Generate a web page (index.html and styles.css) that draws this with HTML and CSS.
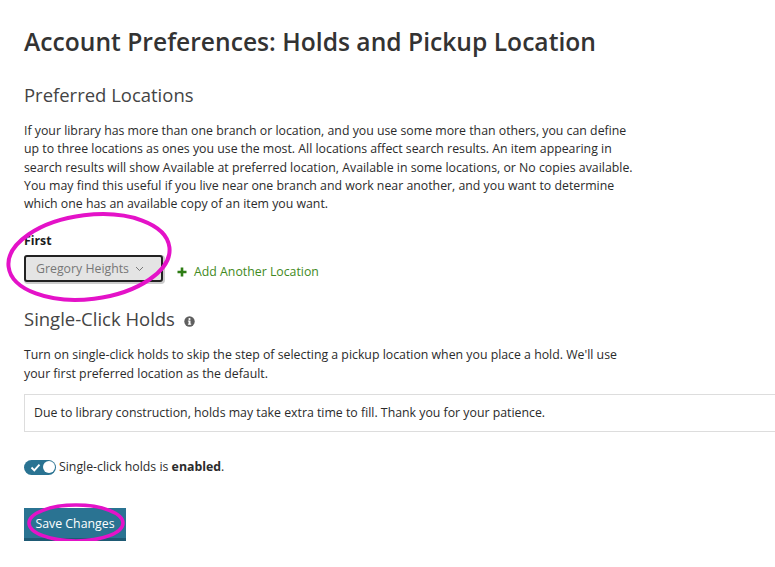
FILE: index.html
```html
<!DOCTYPE html>
<html lang="en">

<head>
  <title>Account Preferences: Holds and Pickup Location</title>
  <link rel="stylesheet" href="styles.css">
</head>

<body>
  <h1 class="page-title">Account Preferences: Holds and Pickup Location</h1>

  <h2 class="section-title">Preferred Locations</h2>
  <p class="intro">If your library has more than one branch or location, and you use some more than others, you can define<br>up to three locations as ones you use the most. All locations affect search results. An item appearing in<br>search results will show Available at preferred location, Available in some locations, or No copies available.<br>You may find this useful if you live near one branch and work near another, and you want to determine<br>which one has an available copy of an item you want.</p>

  <div class="field-label">First</div>
  <div class="location-row">
    <div class="select-wrapper">
      <div class="location-select">
        <span>Gregory Heights</span>
        <svg class="chevron" width="9" height="6" viewBox="0 0 9 6"><path d="M1 1l3.5 3.5L8 1" fill="none" stroke="#777" stroke-width="1"/></svg>
      </div>
      <svg class="circle circle-select" width="170" height="100" viewBox="0 0 170 100"><ellipse cx="85" cy="50" rx="81" ry="42" fill="none" stroke="#e412c8" stroke-width="4" transform="rotate(-7 85 50)"/></svg>
    </div>
    <a class="add-location">
      <svg width="10" height="10" viewBox="0 0 10 10"><path d="M5 0.5v9M0.5 5h9" stroke="#2e7d14" stroke-width="2.6"/></svg>
      <span>Add Another Location</span>
    </a>
  </div>

  <h2 class="section-title holds-title">Single-Click Holds
    <svg class="info" width="11" height="11" viewBox="0 0 11 11"><circle cx="5.5" cy="5.5" r="5.2" fill="#5f5f5f"/><rect x="4.6" y="4.6" width="1.9" height="3.8" fill="#fff"/><rect x="3.9" y="7.7" width="3.3" height="1" fill="#fff"/><rect x="3.9" y="4.6" width="1.6" height="0.9" fill="#fff"/><circle cx="5.5" cy="3" r="1.1" fill="#fff"/></svg>
  </h2>
  <p class="intro holds-intro">Turn on single-click holds to skip the step of selecting a pickup location when you place a hold. We'll use<br>your first preferred location as the default.</p>

  <div class="notice">Due to library construction, holds may take extra time to fill. Thank you for your patience.</div>

  <div class="toggle-row">
    <span class="toggle">
      <svg width="11" height="9" viewBox="0 0 11 9"><path d="M1.5 4.5l2.8 2.8L9.5 1.6" fill="none" stroke="#fff" stroke-width="1.9"/></svg>
      <span class="knob"></span>
    </span>
    <span>Single-click holds is <b>enabled</b>.</span>
  </div>

  <div class="save-wrapper">
    <button class="save-button">Save Changes</button>
    <svg class="circle circle-save" width="100" height="42" viewBox="0 0 100 42"><ellipse cx="50" cy="21" rx="47" ry="18" fill="none" stroke="#e412c8" stroke-width="3.5"/></svg>
  </div>
</body>

</html>
```

FILE: styles.css
```css
body {
  margin: 0;
  padding: 0 0 0 24px;
  background-color: white;
  color: #2b2b2b;
  font-family: "Open Sans", sans-serif;
  font-size: 12.32px;
  line-height: 18.3px;
  overflow: hidden;
}

.page-title {
  margin: 0;
  padding-top: 26px;
  font-size: 24.64px;
  line-height: 32px;
  font-weight: 600;
  color: #333;
}

.section-title {
  margin: 0;
  padding-top: 24px;
  font-size: 18.48px;
  line-height: 26px;
  font-weight: 400;
  color: #444;
}

.intro {
  margin: 14px 0 0;
  white-space: nowrap;
}

.field-label {
  margin-top: 18.5px;
  font-weight: 700;
  color: #1c1c1c;
}

.location-row {
  display: flex;
  align-items: center;
  margin-top: 5px;
}

.select-wrapper {
  position: relative;
}

.location-select {
  display: flex;
  align-items: center;
  gap: 6px;
  box-sizing: border-box;
  width: 139px;
  height: 27px;
  padding-left: 10px;
  background-color: #e4e4e4;
  border: 2px solid #222;
  border-radius: 3px;
  box-shadow: 1px 1px 0 1px #ccc;
  color: #777;
}

.circle {
  position: absolute;
  pointer-events: none;
}

.circle-select {
  left: -20px;
  top: -48px;
}

.add-location {
  display: flex;
  align-items: center;
  gap: 7px;
  margin: 7px 0 0 14px;
  color: #3f8a22;
}

.holds-title {
  padding-top: 24px;
}

.info {
  margin-left: 4px;
  vertical-align: -1px;
}

.holds-intro {
  margin-top: 14px;
}

.notice {
  margin-top: 11px;
  margin-right: -2px;
  padding: 9px;
  border: 1px solid #ddd;
  border-right: 0;
}

.toggle-row {
  display: flex;
  align-items: center;
  gap: 3px;
  margin-top: 26px;
}

.toggle {
  display: flex;
  align-items: center;
  justify-content: space-between;
  box-sizing: border-box;
  width: 32px;
  height: 15px;
  padding: 0 1.5px 0 6px;
  background-color: #2a7392;
  border-radius: 8px;
}

.knob {
  width: 12px;
  height: 12px;
  background-color: white;
  border-radius: 50%;
}

.save-wrapper {
  position: relative;
  width: 102px;
  margin-top: 32px;
}

.save-button {
  display: block;
  width: 102px;
  height: 33px;
  padding: 0;
  background-color: #2a7392;
  border: 0;
  border-bottom: 3px solid #1e5a74;
  color: white;
  font-family: inherit;
  font-size: 12.32px;
}

.circle-save {
  left: 2px;
  top: -6px;
}
```
